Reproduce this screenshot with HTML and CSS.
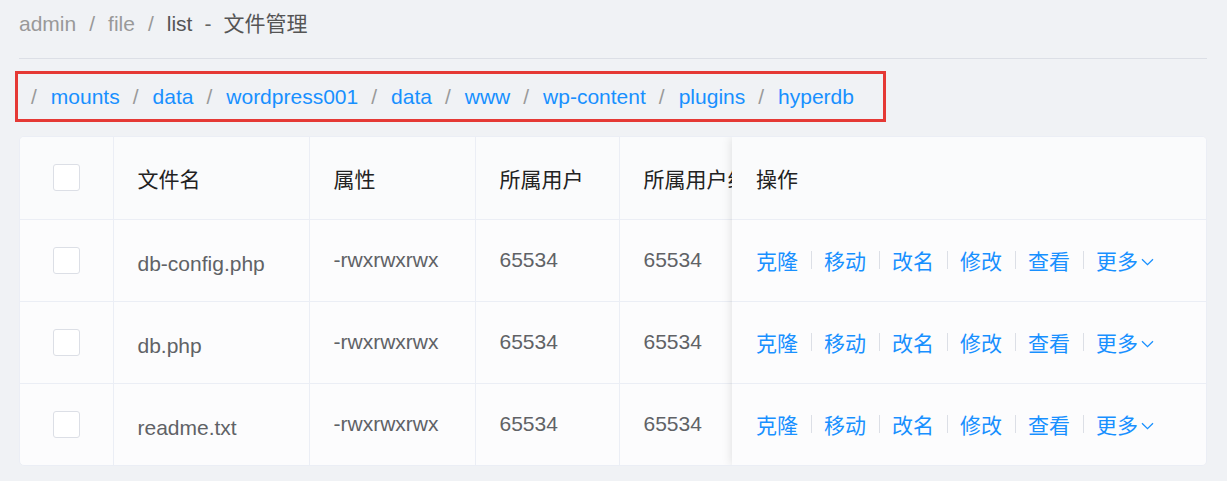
FILE: index.html
```html
<!DOCTYPE html>
<html lang="zh-CN">
<head>
    <meta charset="UTF-8">
    <title>文件管理</title>
    <link rel="stylesheet" href="styles.css">
</head>
<body>
    <div class="page">
        <div class="page-title">
            <span class="crumb">admin</span><span class="sep">/</span><span class="crumb">file</span><span class="sep">/</span><span class="current">list</span><span class="dash">-</span><span class="current">文件管理</span>
        </div>
        <div class="divider"></div>

        <div class="path-box">
            <span class="path-sep">/</span><a href="#">mounts</a>
            <span class="path-sep">/</span><a href="#">data</a>
            <span class="path-sep">/</span><a href="#">wordpress001</a>
            <span class="path-sep">/</span><a href="#">data</a>
            <span class="path-sep">/</span><a href="#">www</a>
            <span class="path-sep">/</span><a href="#">wp-content</a>
            <span class="path-sep">/</span><a href="#">plugins</a>
            <span class="path-sep">/</span><a href="#">hyperdb</a>
        </div>

        <div class="file-table">
            <div class="table-main">
                <table>
                    <colgroup>
                        <col class="c-check"><col class="c-name"><col class="c-attr"><col class="c-user"><col class="c-group">
                    </colgroup>
                    <thead>
                        <tr>
                            <th class="check-cell"><span class="checkbox"></span></th>
                            <th>文件名</th>
                            <th>属性</th>
                            <th>所属用户</th>
                            <th>所属用户组</th>
                        </tr>
                    </thead>
                    <tbody>
                        <tr>
                            <td class="check-cell"><span class="checkbox"></span></td>
                            <td class="name-cell">db-config.php</td>
                            <td>-rwxrwxrwx</td>
                            <td>65534</td>
                            <td>65534</td>
                        </tr>
                        <tr>
                            <td class="check-cell"><span class="checkbox"></span></td>
                            <td class="name-cell">db.php</td>
                            <td>-rwxrwxrwx</td>
                            <td>65534</td>
                            <td>65534</td>
                        </tr>
                        <tr>
                            <td class="check-cell"><span class="checkbox"></span></td>
                            <td class="name-cell">readme.txt</td>
                            <td>-rwxrwxrwx</td>
                            <td>65534</td>
                            <td>65534</td>
                        </tr>
                    </tbody>
                </table>
            </div>
            <div class="table-fixed">
                <table>
                    <thead>
                        <tr><th>操作</th></tr>
                    </thead>
                    <tbody>
                        <tr><td><div class="actions"><a href="#">克隆</a><i class="bar"></i><a href="#">移动</a><i class="bar"></i><a href="#">改名</a><i class="bar"></i><a href="#">修改</a><i class="bar"></i><a href="#">查看</a><i class="bar"></i><a href="#" class="more">更多<svg width="13" height="8" viewBox="0 0 13 8"><path d="M1 1.2 L6.5 6.6 L12 1.2" fill="none" stroke="#1890ff" stroke-width="1.3"/></svg></a></div></td></tr>
                        <tr><td><div class="actions"><a href="#">克隆</a><i class="bar"></i><a href="#">移动</a><i class="bar"></i><a href="#">改名</a><i class="bar"></i><a href="#">修改</a><i class="bar"></i><a href="#">查看</a><i class="bar"></i><a href="#" class="more">更多<svg width="13" height="8" viewBox="0 0 13 8"><path d="M1 1.2 L6.5 6.6 L12 1.2" fill="none" stroke="#1890ff" stroke-width="1.3"/></svg></a></div></td></tr>
                        <tr><td><div class="actions"><a href="#">克隆</a><i class="bar"></i><a href="#">移动</a><i class="bar"></i><a href="#">改名</a><i class="bar"></i><a href="#">修改</a><i class="bar"></i><a href="#">查看</a><i class="bar"></i><a href="#" class="more">更多<svg width="13" height="8" viewBox="0 0 13 8"><path d="M1 1.2 L6.5 6.6 L12 1.2" fill="none" stroke="#1890ff" stroke-width="1.3"/></svg></a></div></td></tr>
                    </tbody>
                </table>
            </div>
        </div>
    </div>
</body>
</html>
```

FILE: styles.css
```css
body {
    margin: 0;
    background-color: #f0f2f5;
    font-family: "Liberation Sans", "Noto Sans CJK SC", sans-serif;
    font-size: 21px;
}
.page {
    padding: 0 20px 0 19px;
}
.page-title {
    height: 48px;
    line-height: 48px;
    color: #999;
}
.page-title .sep {
    margin: 0 13px;
}
.page-title .current {
    color: #555;
}
.page-title .dash {
    color: #666;
    margin: 0 12px;
}
.divider {
    height: 1px;
    background-color: #dcdfe6;
    margin-top: 10px;
}
.path-box {
    box-sizing: border-box;
    width: 871px;
    height: 51px;
    margin: 12px 0 0 -4px;
    padding-left: 13px;
    border: 3px solid #e53935;
    display: flex;
    align-items: center;
    white-space: nowrap;
}
.path-box a {
    color: #1890ff;
    text-decoration: none;
}
.path-sep {
    color: #9a9a9a;
    margin: 0 14px 0 0;
}
.path-box a + .path-sep {
    margin-left: 13px;
}
.file-table {
    display: flex;
    margin-top: 14px;
    border: 1px solid #ebeef5;
    border-radius: 5px;
    overflow: hidden;
    background-color: #fcfcfd;
}
.table-main {
    flex: 1;
    overflow: hidden;
}
.table-fixed {
    width: 474px;
    flex: none;
    position: relative;
    z-index: 1;
    background-color: #fcfcfd;
    box-shadow: 0 0 10px rgba(0, 0, 0, 0.13);
}
table {
    border-collapse: collapse;
    table-layout: fixed;
}
.table-main table {
    width: 799px;
}
.table-fixed table {
    width: 100%;
}
.c-check { width: 93px; }
.c-name { width: 196px; }
.c-attr { width: 166px; }
.c-user { width: 144px; }
.c-group { width: 200px; }
th, td {
    box-sizing: border-box;
    height: 82px;
    padding: 0 24px;
    text-align: left;
    white-space: nowrap;
    border-bottom: 1px solid #ebeef5;
}
.table-main th, .table-main td {
    border-right: 1px solid #ebeef5;
}
tbody tr:last-child td {
    border-bottom: none;
}
th {
    font-weight: normal;
    color: #222;
    background-color: #fafbfc;
}
td {
    color: #606266;
}
.check-cell {
    padding: 0;
    text-align: center;
}
.name-cell {
    padding-top: 7px;
}
.checkbox {
    display: inline-block;
    box-sizing: border-box;
    width: 27px;
    height: 27px;
    vertical-align: middle;
    border: 1px solid #dcdfe6;
    border-radius: 3px;
    background-color: #fff;
}
.actions {
    display: flex;
    align-items: center;
}
.actions a {
    color: #1890ff;
    text-decoration: none;
}
.actions .bar {
    width: 1px;
    height: 18px;
    margin: 0 12px 0 13px;
    background-color: #dcdfe6;
}
.actions .more svg {
    margin-left: 3px;
    vertical-align: 3px;
}
```
